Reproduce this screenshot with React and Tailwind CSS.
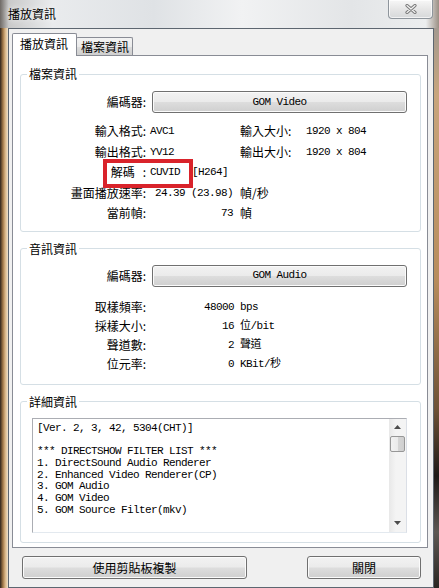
import React from "react";

const mono = "font-['Liberation_Mono','Noto_Sans_CJK_TC',monospace] text-[11px] tracking-[-0.6px]";
const btnFace =
  "rounded-[3px] border border-[#707070] bg-[linear-gradient(to_bottom,#f2f2f2,#ebebeb_48%,#dddddd_52%,#cfcfcf)] shadow-[inset_0_0_0_1px_#fbfbfb]";

const GroupBox = ({ title, className, children }) => {
  return (
    <fieldset className={"rounded-[3px] border border-[#d5dfe5] " + className}>
      <legend className="ml-[6px] px-[2px] leading-[16px]">{title}</legend>
      {children}
    </fieldset>
  );
};

const CodecRow = ({ name }) => (
  <div className="flex h-[22px] items-center">
    <span className="w-[125px] text-right">編碼器:</span>
    <div className={"ml-[6px] flex h-[22px] w-[255px] items-center justify-center " + btnFace}>
      <span className={mono}>{name}</span>
    </div>
  </div>
);

const AudioRow = ({ label, value, unit }) => (
  <div className="flex h-[19px] items-center">
    <span className="w-[125px] text-right">{label}</span>
    <span className={"w-[94px] pr-[6px] text-right " + mono}>{value}</span>
    <span className={mono}>{unit}</span>
  </div>
);

const logLines = [
  "[Ver. 2, 3, 42, 5304(CHT)]",
  "",
  "*** DIRECTSHOW FILTER LIST ***",
  "1. DirectSound Audio Renderer",
  "2. Enhanced Video Renderer(CP)",
  "3. GOM Audio",
  "4. GOM Video",
  "5. GOM Source Filter(mkv)",
];

export default function App() {
  return (
    <div className="flex h-[588px] w-[439px] flex-col overflow-hidden bg-[#dcdfe2] font-['Noto_Sans_CJK_TC',sans-serif] text-[12px] text-black">
      {/* title bar */}
      <div className="flex h-[28px] shrink-0 items-start bg-[linear-gradient(to_right,#6f6a66,#c9c9c9_2%,#e9ebed_12%,#dfe2e5_35%,#f1f2f3_55%,#e3e5e7_80%,#eceeef_97%,#9b8f84)]">
        <span className="ml-[8px] mt-[6px] leading-[16px] [text-shadow:0_0_6px_#ffffff]">播放資訊</span>
        <div className="ml-auto mr-[6px] flex h-[19px] w-[45px] items-center justify-center rounded-b-[4px] border border-t-0 border-[#8e959c] bg-[linear-gradient(to_bottom,#f7f7f7,#e6e6e6_50%,#d6d8da)] shadow-[inset_0_0_0_1px_#ffffffaa]">
          <svg width="12" height="10" viewBox="0 0 12 10">
            <path d="M2 1.5 L10 8.5 M10 1.5 L2 8.5" stroke="#787878" strokeWidth="3.2" strokeLinecap="round" />
            <path d="M2 1.5 L10 8.5 M10 1.5 L2 8.5" stroke="#f4f4f4" strokeWidth="1.2" strokeLinecap="round" />
          </svg>
        </div>
      </div>

      <div className="flex flex-1">
        {/* left glass edge */}
        <div className="w-[8px] bg-[linear-gradient(to_right,#2e241c,#9c7446_35%,#d9b585_65%,#efe2cc)]" />

        {/* client area */}
        <div className="flex w-[426px] flex-col border border-[#5d6670] bg-[#f0f0f0]">
          <div className="flex h-[26px] items-end pl-[3px] pr-[5px]">
            <div className="relative z-10 -mb-px flex h-[23px] w-[65px] items-start rounded-t-[2px] border border-b-0 border-[#898c95] bg-white pl-[7px] pt-[2px] leading-[16px]">
              播放資訊
            </div>
            <div className="-ml-px flex h-[18px] w-[57px] items-center rounded-t-[2px] border border-b-0 border-[#898c95] bg-[linear-gradient(to_bottom,#f3f3f3,#ebebeb_50%,#dddddd_51%,#cfcfcf)] pl-[4px] leading-[16px]">
              檔案資訊
            </div>
          </div>

          <div className="ml-[3px] mr-[5px] flex flex-1 flex-col border border-[#898c95] bg-white pl-[7px] pr-[6px] pt-[10px]">
            {/* file info */}
            <GroupBox title="檔案資訊" className="pb-[7px] pt-[9px]">
              <CodecRow name="GOM Video" />
              <div className="mt-[8px]">
                <div className="flex h-[20.5px] items-center">
                  <span className="w-[125px] text-right">輸入格式:</span>
                  <span className={"w-[94px] pl-[4px] " + mono}>AVC1</span>
                  <span className="w-[66px]">輸入大小:</span>
                  <span className={mono}>1920 x 804</span>
                </div>
                <div className="flex h-[20.5px] items-center">
                  <span className="w-[125px] text-right">輸出格式:</span>
                  <span className={"w-[94px] pl-[4px] " + mono}>YV12</span>
                  <span className="w-[66px]">輸出大小:</span>
                  <span className={mono}>1920 x 804</span>
                </div>
                <div className="relative flex h-[20.5px] items-center">
                  <span className="w-[125px] text-right">
                    解碼<span className="ml-[8px]">:</span>
                  </span>
                  <span className={"whitespace-pre pl-[4px] " + mono}>CUVID  [H264]</span>
                  <div className="absolute left-[82px] top-[-3px] h-[29px] w-[90px] border-[4px] border-[#d9232b]" />
                </div>
                <div className="flex h-[20.5px] items-center">
                  <span className="w-[125px] text-right">畫面播放速率:</span>
                  <span className={"w-[94px] pr-[7px] text-right " + mono}>24.39 (23.98)</span>
                  <span>幀/秒</span>
                </div>
                <div className="flex h-[20.5px] items-center">
                  <span className="w-[125px] text-right">當前幀:</span>
                  <span className={"w-[94px] pr-[7px] text-right " + mono}>73</span>
                  <span>幀</span>
                </div>
              </div>
            </GroupBox>

            {/* audio info */}
            <GroupBox title="音訊資訊" className="mt-[9px] pb-[10px] pt-[8px]">
              <CodecRow name="GOM Audio" />
              <div className="mt-[11px]">
                <AudioRow label="取樣頻率:" value="48000" unit="bps" />
                <AudioRow label="採樣大小:" value="16" unit="位/bit" />
                <AudioRow label="聲道數:" value="2" unit="聲道" />
                <AudioRow label="位元率:" value="0" unit="KBit/秒" />
              </div>
            </GroupBox>

            {/* details */}
            <GroupBox title="詳細資訊" className="mt-[9px] pb-[9px] pt-[8px]">
              <div className="ml-[11px] flex h-[115px] w-[375px] border border-[#abadb3] border-b-[#e3e9ef] border-r-[#dbdfe6] bg-white">
                <div className={"flex-1 whitespace-pre pl-[4px] pt-[4px] leading-[11.75px] " + mono}>
                  {logLines.map((line, i) => (
                    <div key={i} className="h-[11.75px]">
                      {line}
                    </div>
                  ))}
                </div>
                <div className="flex w-[17px] flex-col bg-[linear-gradient(to_right,#e8e8e8,#f4f4f4_40%,#f4f4f4)]">
                  <div className="flex h-[17px] items-center justify-center">
                    <svg width="7" height="4" viewBox="0 0 7 4">
                      <path d="M0 4 L3.5 0 L7 4 Z" fill="#4d4d4d" />
                    </svg>
                  </div>
                  <div className="mx-[1px] h-[16px] rounded-[2px] border border-[#979797] bg-[linear-gradient(to_right,#f2f2f2,#ebebeb_50%,#d6d6d6_51%,#cfcfcf)]" />
                  <div className="flex-1" />
                  <div className="flex h-[17px] items-center justify-center">
                    <svg width="7" height="4" viewBox="0 0 7 4">
                      <path d="M0 0 L7 0 L3.5 4 Z" fill="#4d4d4d" />
                    </svg>
                  </div>
                </div>
              </div>
            </GroupBox>
          </div>

          {/* bottom buttons */}
          <div className="flex justify-between pb-[8px] pl-[13px] pr-[12px] pt-[8px]">
            <div className={"flex h-[23px] w-[225px] items-center justify-center " + btnFace}>使用剪貼板複製</div>
            <div className={"flex h-[23px] w-[114px] items-center justify-center " + btnFace}>關閉</div>
          </div>
        </div>

        {/* right glass edge */}
        <div className="flex-1 bg-[linear-gradient(to_bottom,#a49a90,#c8a57c_12%,#b88d5c_45%,#6e5236_68%,#1e1a17_80%,#5d5853_90%,#2a2622)]" />
      </div>
    </div>
  );
}
